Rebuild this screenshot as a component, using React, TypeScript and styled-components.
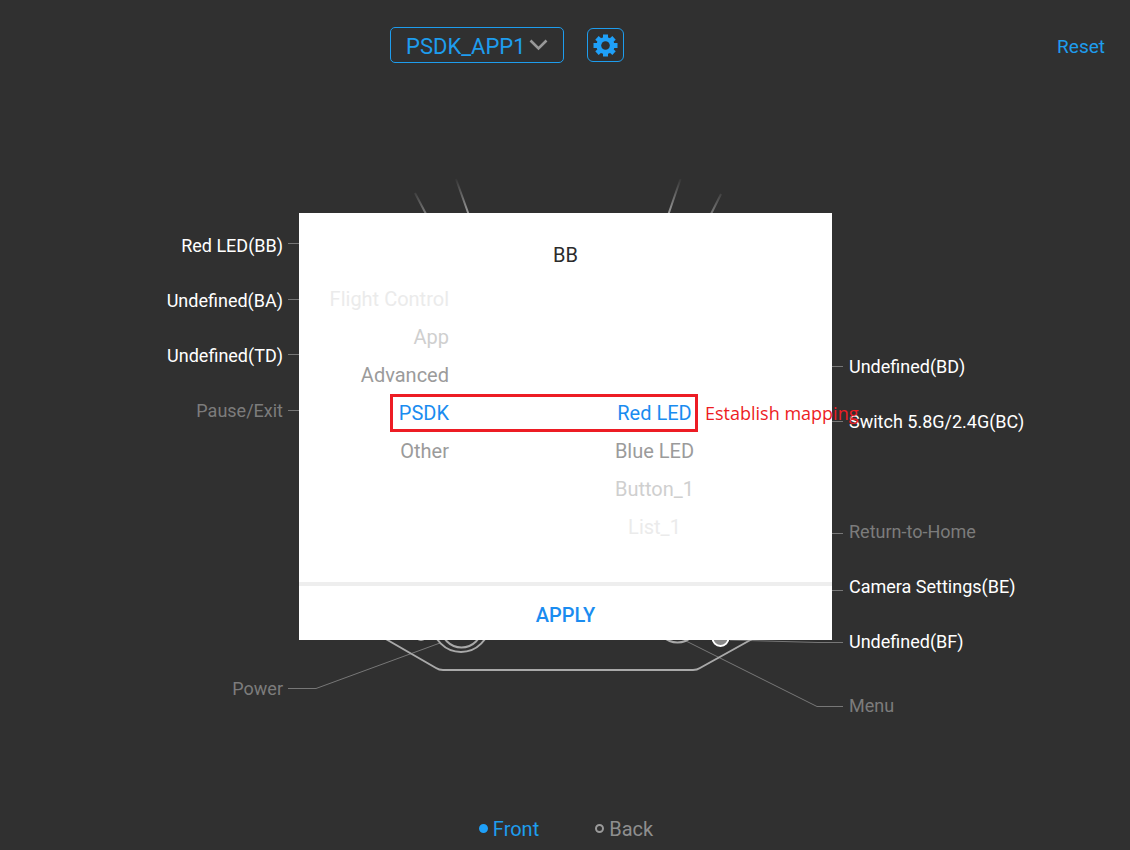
import React, { useState } from "react";
import styled, { createGlobalStyle } from "styled-components";

const GlobalStyle = createGlobalStyle`
  * { box-sizing: border-box; }
  body { margin: 0; background: #303030; font-family: Roboto, "Liberation Sans", sans-serif; }
  button, select { font-family: inherit; }
`;

const Page = styled.div`
  min-height: 100vh;
  display: flex;
  flex-direction: column;
  background: #303030;
  color: #fff;
`;

const Header = styled.header`
  display: grid;
  grid-template-columns: 1fr 566px 1fr;
  align-items: center;
  padding: 27px 0 0 2px;
`;

const HeaderTools = styled.div`
  grid-column: 2;
  display: flex;
  align-items: center;
  gap: 23px;
  padding-left: 107px;
`;

const SelectWrap = styled.div`
  display: grid;
  align-items: center;
`;

const AppSelect = styled.select`
  grid-area: 1 / 1;
  appearance: none;
  width: 174px;
  height: 36px;
  padding: 2px 36px 0 15px;
  border: 1px solid #1e9dee;
  border-radius: 5px;
  background: transparent;
  color: #1e9dee;
  font-size: 22px;
`;

const Chevron = styled.svg`
  grid-area: 1 / 1;
  justify-self: end;
  margin-right: 16px;
  width: 19px;
  height: 12px;
  pointer-events: none;
`;

const SettingsButton = styled.button`
  display: grid;
  place-items: center;
  width: 37px;
  height: 34px;
  padding: 0;
  border: 1px solid #1e9dee;
  border-radius: 6px;
  background: transparent;
  color: #1fa0f8;
`;

const ResetButton = styled.button`
  justify-self: end;
  margin-right: 25px;
  padding: 2px 0 0;
  border: 0;
  background: none;
  color: #1e9dee;
  font-size: 19px;
`;

const Stage = styled.main`
  flex: 1;
  display: grid;
  grid-template-columns: 1fr 566px 1fr;
  align-items: start;
  padding: 107px 0 0 2px;
`;

const Labels = styled.ul<{ $side: "left" | "right" }>`
  list-style: none;
  margin: 0;
  padding: ${(p) => (p.$side === "left" ? "48px 0 0" : "169px 0 0")};
  text-align: ${(p) => (p.$side === "left" ? "right" : "left")};
`;

const Label = styled.li<{ $muted?: boolean; $gap?: number }>`
  height: 55px;
  margin-top: ${(p) => p.$gap ?? 0}px;
  line-height: 55px;
  font-size: 18px;
  white-space: nowrap;
  color: ${(p) => (p.$muted ? "#7c7c7c" : "#fff")};
`;

const Center = styled.div`
  display: grid;
  align-items: start;
`;

const Diagram = styled.svg`
  grid-area: 1 / 1;
  display: block;
  width: 566px;
  height: 560px;
`;

const Dialog = styled.section`
  grid-area: 1 / 1;
  position: relative;
  z-index: 1;
  margin: 43px 17px 0 16px;
  background: #fff;
  display: flex;
  flex-direction: column;
`;

const DialogTitle = styled.h2`
  margin: 0;
  padding: 29px 0 12px;
  text-align: center;
  font-size: 20px;
  line-height: 26px;
  font-weight: 400;
  color: #2b2b2b;
`;

const Pickers = styled.div`
  display: grid;
  grid-template-columns: 150px 1fr;
  padding-bottom: 36px;
`;

const Picker = styled.div<{ $align: "flex-end" | "center"; $before: number }>`
  display: flex;
  flex-direction: column;
  align-items: ${(p) => p.$align};
  padding-top: ${(p) => p.$before}px;
  padding-left: ${(p) => (p.$align === "center" ? "28px" : "0")};
`;

const Option = styled.button<{ $tone: string }>`
  height: 38px;
  padding: 0;
  border: 0;
  background: none;
  font-size: 20px;
  line-height: 38px;
  color: ${(p) => p.$tone};
`;

const ApplyButton = styled.button`
  height: 58px;
  padding: 3px 0 0;
  border: 0;
  border-top: 4px solid #eeeeee;
  background: none;
  color: #1a8cf0;
  font-size: 20px;
  font-weight: 500;
`;

const Highlight = styled.div`
  position: absolute;
  left: 91px;
  top: 181px;
  width: 308px;
  height: 38px;
  border: 3px solid #ed1c24;
  pointer-events: none;
`;

const Note = styled.span`
  position: absolute;
  left: 406px;
  top: 186px;
  font-family: "Open Sans", "Noto Sans", sans-serif;
  font-size: 18px;
  line-height: 28px;
  white-space: nowrap;
  color: #ed1c24;
`;

const Views = styled.footer`
  display: flex;
  justify-content: center;
  gap: 56px;
  padding: 0 0 8px 2px;
`;

const ViewOption = styled.label<{ $active: boolean }>`
  display: flex;
  align-items: center;
  gap: 5px;
  font-size: 20px;
  line-height: 26px;
  color: ${(p) => (p.$active ? "#1e9dee" : "#8e8e8e")};
`;

const ViewRadio = styled.input`
  appearance: none;
  width: 9px;
  height: 9px;
  margin: 0 0 2px;
  border: 2px solid #9a9a9a;
  border-radius: 50%;
  &:checked {
    border-color: #1fa0f8;
    background: #1fa0f8;
  }
`;

const BLUE = "#1a8cf0";
const FADE = [BLUE, "#9b9b9b", "#cfcfcf", "#ebebeb"];

const categories = ["Flight Control", "App", "Advanced", "PSDK", "Other"];
const actions = ["Red LED", "Blue LED", "Button_1", "List_1"];

const leftLabels = [
  { text: "Red LED(BB)" },
  { text: "Undefined(BA)" },
  { text: "Undefined(TD)" },
  { text: "Pause/Exit", muted: true },
  { text: "Power", muted: true, gap: 223 },
];

const rightLabels = [
  { text: "Undefined(BD)" },
  { text: "Switch 5.8G/2.4G(BC)" },
  { text: "Return-to-Home", muted: true, gap: 55 },
  { text: "Camera Settings(BE)" },
  { text: "Undefined(BF)" },
  { text: "Menu", muted: true, gap: 9 },
];

function GearIcon() {
  return (
    <svg width="25" height="23" viewBox="-12.500 -11.500 25 23" aria-hidden="true">
      <g fill="currentColor">
        <rect x="-2.500" y="-11" width="5" height="22" />
        <rect x="-12" y="-2.500" width="24" height="5" />
        <rect x="-2.500" y="-11.500" width="5" height="23" transform="rotate(48)" />
        <rect x="-2.500" y="-11.500" width="5" height="23" transform="rotate(-48)" />
        <ellipse rx="9.200" ry="8.600" />
      </g>
      <circle r="4.300" fill="#303030" />
    </svg>
  );
}

function Controller() {
  return (
    <Diagram viewBox="283 170 566 560" aria-hidden="true">
      <defs>
        <linearGradient id="antenna" gradientUnits="userSpaceOnUse" x1="0" y1="177" x2="0" y2="215">
          <stop offset="0" stopColor="#a0a0a0" stopOpacity="0" />
          <stop offset="1" stopColor="#a0a0a0" />
        </linearGradient>
        <linearGradient id="antennaRear" gradientUnits="userSpaceOnUse" x1="0" y1="190" x2="0" y2="216">
          <stop offset="0" stopColor="#808080" stopOpacity="0.1" />
          <stop offset="1" stopColor="#808080" />
        </linearGradient>
      </defs>
      <g fill="none" strokeWidth="2">
        <path d="M456 179L468.500 214M680.500 179L668.500 214" stroke="url(#antenna)" />
        <path d="M415 193L426 214M721 194L711 214" stroke="url(#antennaRear)" />
      </g>
      <g fill="none" stroke="#777" strokeWidth="1">
        <path d="M288 243.500H300M288 299.500H300M288 354.500H300M288 410.500H300" />
        <path d="M832 366.500H843M832 421.500H843M832 533.500H843M832 590.500H843" />
        <path d="M288 688.500H316L440 643" />
        <path d="M730 640L818 642.500H843" />
        <path d="M684 640L817 706.500H843" />
      </g>
      <g fill="none" stroke="#a9a9a9" strokeWidth="2">
        <path d="M384 638L436 668Q439 670 443 670H693Q697 670 700 668L754 638" />
        <circle cx="461" cy="623.500" r="28.500" />
        <circle cx="461.500" cy="627" r="20.500" />
        <circle cx="677.500" cy="622" r="20.500" />
        <circle cx="421" cy="635" r="5" />
      </g>
      <circle cx="720.500" cy="638" r="8" fill="#8a8a8a" stroke="#fff" strokeWidth="2" />
    </Diagram>
  );
}

export default function App() {
  const [category, setCategory] = useState("PSDK");
  const [action, setAction] = useState("Red LED");
  const [view, setView] = useState("Front");

  const tone = (items: string[], item: string, current: string) =>
    FADE[Math.min(3, Math.abs(items.indexOf(item) - items.indexOf(current)))];

  return (
    <>
      <GlobalStyle />
      <Page>
        <Header>
          <HeaderTools>
            <SelectWrap>
              <AppSelect aria-label="Payload application" defaultValue="PSDK_APP1">
                <option>PSDK_APP1</option>
              </AppSelect>
              <Chevron viewBox="0 0 19 12" aria-hidden="true">
                <path d="M1.500 1.500L9.500 9.500L17.500 1.500" fill="none" stroke="#999" strokeWidth="2.600" />
              </Chevron>
            </SelectWrap>
            <SettingsButton aria-label="Settings">
              <GearIcon />
            </SettingsButton>
          </HeaderTools>
          <ResetButton>Reset</ResetButton>
        </Header>

        <Stage>
          <Labels $side="left">
            {leftLabels.map((l) => (
              <Label key={l.text} $muted={l.muted} $gap={l.gap}>{l.text}</Label>
            ))}
          </Labels>
          <Center>
            <Controller />
            <Dialog role="dialog" aria-labelledby="dialog-title">
              <DialogTitle id="dialog-title">BB</DialogTitle>
              <Pickers>
                <Picker $align="flex-end" $before={0}>
                  {categories.map((c) => (
                    <Option key={c} $tone={tone(categories, c, category)} onClick={() => setCategory(c)}>{c}</Option>
                  ))}
                </Picker>
                <Picker $align="center" $before={114}>
                  {actions.map((a) => (
                    <Option key={a} $tone={tone(actions, a, action)} onClick={() => setAction(a)}>{a}</Option>
                  ))}
                </Picker>
              </Pickers>
              <ApplyButton>APPLY</ApplyButton>
              <Highlight />
              <Note>Establish mapping</Note>
            </Dialog>
          </Center>
          <Labels $side="right">
            {rightLabels.map((l) => (
              <Label key={l.text} $muted={l.muted} $gap={l.gap}>{l.text}</Label>
            ))}
          </Labels>
        </Stage>

        <Views>
          {["Front", "Back"].map((v) => (
            <ViewOption key={v} $active={view === v}>
              <ViewRadio type="radio" name="view" checked={view === v} onChange={() => setView(v)} />
              {v}
            </ViewOption>
          ))}
        </Views>
      </Page>
    </>
  );
}
